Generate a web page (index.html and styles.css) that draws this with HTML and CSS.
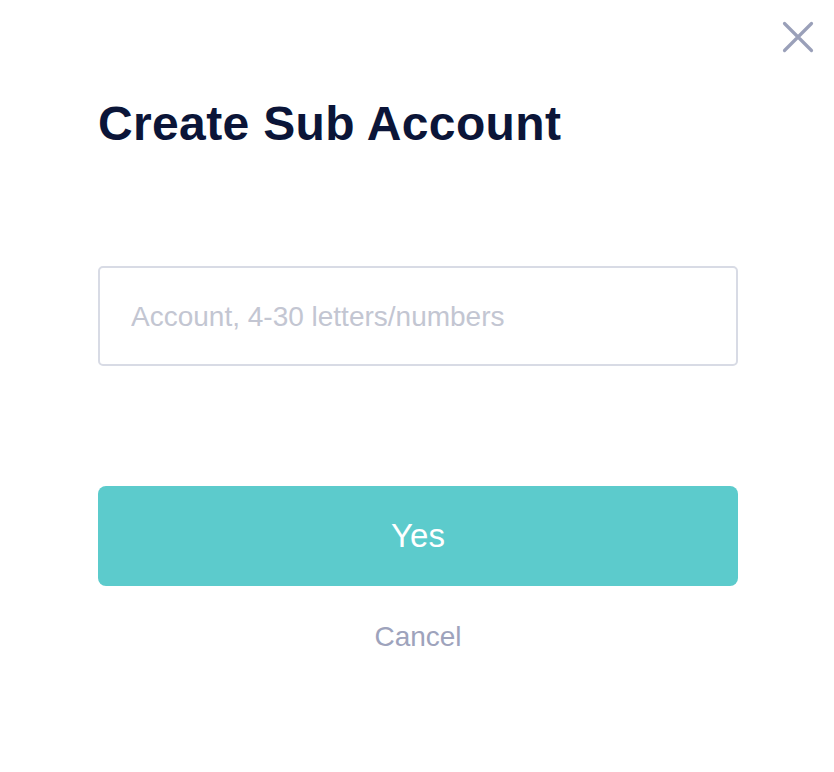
FILE: index.html
```html
<!DOCTYPE html>
<html>
<head>
<meta charset="utf-8">
<link rel="stylesheet" href="styles.css">
</head>
<body>
<div class="dialog">
  <button class="close" aria-label="Close">
    <svg width="32" height="32" viewBox="0 0 32 32"><path d="M2.5 2.5 L29.5 29.5 M29.5 2.5 L2.5 29.5" stroke="#9aa0b9" stroke-width="3.2" stroke-linecap="round" fill="none"/></svg>
  </button>
  <h1 class="title">Create Sub Account</h1>
  <input class="field" type="text" placeholder="Account, 4-30 letters/numbers">
  <button class="primary">Yes</button>
  <div class="cancel">Cancel</div>
</div>
</body>
</html>
```
FILE: styles.css
```css
html, body {
  margin: 0;
  padding: 0;
  background: #ffffff;
}
body {
  font-family: "Liberation Sans", Arial, sans-serif;
}
.dialog {
  position: relative;
  width: 834px;
  height: 772px;
  box-sizing: border-box;
  padding: 96px 96px 0 98px;
  display: flex;
  flex-direction: column;
}
.close {
  position: absolute;
  top: 21px;
  left: 782px;
  width: 32px;
  height: 32px;
  padding: 0;
  border: none;
  background: none;
  display: flex;
}
.title {
  margin: 0;
  font-size: 48px;
  line-height: 56px;
  font-weight: 700;
  letter-spacing: 0.35px;
  color: #0b1538;
}
.field {
  margin-top: 114px;
  width: 640px;
  height: 100px;
  box-sizing: border-box;
  border: 2px solid #d8dbe5;
  border-radius: 5px;
  padding: 2px 31px 0;
  font-family: "Liberation Sans", Arial, sans-serif;
  font-size: 28px;
  color: #0b1538;
  outline: none;
}
.field::placeholder {
  color: #c3c6d2;
}
.primary {
  margin-top: 120px;
  width: 640px;
  height: 100px;
  border: none;
  border-radius: 8px;
  background: #5ccbcc;
  color: #ffffff;
  font-family: "Liberation Sans", Arial, sans-serif;
  font-size: 33px;
  padding: 0;
}
.cancel {
  margin-top: 31px;
  width: 640px;
  text-align: center;
  line-height: 40px;
  font-size: 28px;
  color: #9ea3bc;
}
```
